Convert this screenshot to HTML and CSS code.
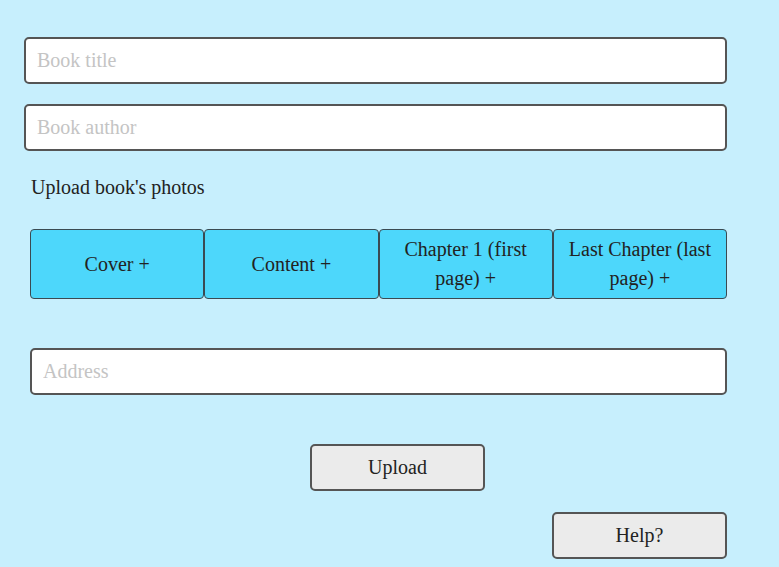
FILE: index.html
```html
<!DOCTYPE html>
<html>
<head>
<meta charset="utf-8">
<link rel="stylesheet" href="styles.css">
</head>
<body>
<div class="page">
  <input class="field field-wide" type="text" placeholder="Book title">
  <input class="field field-wide" type="text" placeholder="Book author">
  <div class="label">Upload book's photos</div>
  <div class="tiles">
    <div class="tile">Cover +</div>
    <div class="tile">Content +</div>
    <div class="tile">Chapter 1 (first page) +</div>
    <div class="tile">Last Chapter (last page) +</div>
  </div>
  <input class="field field-address" type="text" placeholder="Address">
  <div class="actions">
    <button class="btn btn-upload">Upload</button>
    <button class="btn btn-help">Help?</button>
  </div>
</div>
</body>
</html>
```
FILE: styles.css
```css
html, body {
  margin: 0;
  padding: 0;
  background: #c7effd;
}
body {
  width: 779px;
  height: 567px;
  overflow: hidden;
  font-family: "Liberation Serif", "Times New Roman", serif;
  font-size: 20px;
  color: #222;
}
.page {
  display: flex;
  flex-direction: column;
  padding-top: 37px;
  padding-left: 24px;
  width: 703px;
}
.field {
  box-sizing: border-box;
  height: 47px;
  border: 2px solid #555;
  border-radius: 5px;
  background: #fff;
  font-family: inherit;
  font-size: 20px;
  padding: 0 11px;
  outline: none;
  color: #222;
}
.field::placeholder {
  color: #c4c4c4;
}
.field-wide {
  width: 703px;
  margin-bottom: 20px;
}
.label {
  margin: 4px 0 0 7px;
  line-height: 24px;
  height: 24px;
}
.tiles {
  display: flex;
  margin: 30px 0 0 6px;
  width: 697px;
  height: 70px;
}
.tile {
  flex: 1 1 0;
  box-sizing: border-box;
  display: flex;
  align-items: center;
  justify-content: center;
  text-align: center;
  background: #4dd7fb;
  border: 1.5px solid #3a4a52;
  border-radius: 4px;
  padding: 0 10px;
  line-height: 29px;
  color: #222;
}
.field-address {
  width: 697px;
  margin: 49px 0 0 6px;
}
.actions {
  display: flex;
  flex-direction: column;
  margin-top: 49px;
}
.btn {
  box-sizing: border-box;
  width: 175px;
  height: 47px;
  border: 2px solid #555;
  border-radius: 5px;
  background: #ebebeb;
  font-family: inherit;
  font-size: 20px;
  color: #222;
  padding: 0;
}
.btn-upload {
  margin-left: 286px;
}
.btn-help {
  margin-left: 528px;
  margin-top: 21px;
}
```
